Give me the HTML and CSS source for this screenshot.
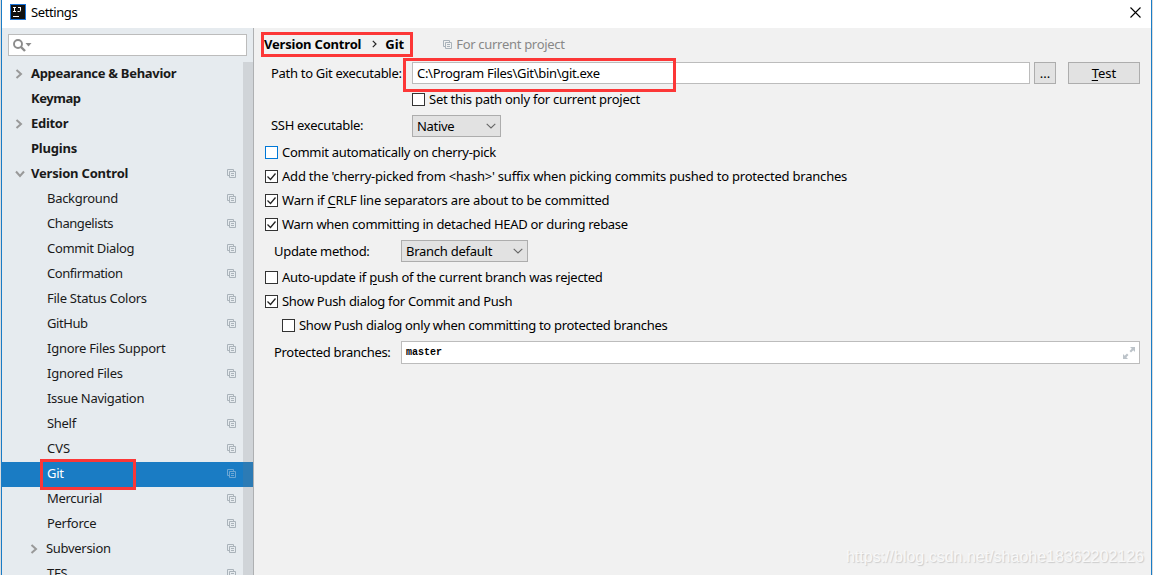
FILE: index.html
```
<!DOCTYPE html>
<html lang="en">
<head>
<meta charset="utf-8">
<title>Settings</title>
<link rel="stylesheet" href="styles.css">
</head>
<body>
<svg class="defs" width="0" height="0">
  <symbol id="copy" viewBox="0 0 9 9"><path d="M2.5 6.500h-2v-6h6v2M2.500 2.500h6v6h-6zM4 4.500h3M4 6.500h3" fill="none" stroke="currentColor"/></symbol>
  <symbol id="check" viewBox="0 0 11 11"><path d="M1.500 5.500l3 3 5-6" fill="none" stroke="#222" stroke-width="1.300"/></symbol>
  <symbol id="down" viewBox="0 0 10 6"><path d="M.7.8L5 5 9.300.8" fill="none" stroke="#666" stroke-width="1.100"/></symbol>
  <symbol id="tright" viewBox="0 0 8 10"><path d="M1.500 1L6 5 1.500 9" fill="none" stroke="#999" stroke-width="2"/></symbol>
  <symbol id="tdown" viewBox="0 0 10 8"><path d="M1 1.500L5 6 9 1.500" fill="none" stroke="#999" stroke-width="2"/></symbol>
</svg>
<div class="window">
  <header class="titlebar">
    <svg class="logo" width="16" height="16" viewBox="0 0 16 16"><rect width="16" height="16" fill="#1a73d8"/><rect x="1" y="1" width="14" height="14" fill="#111"/><path d="M3 3.500h3M4.500 3v5M3 7.500h3M8 3.500h3M10.500 3v3.500q0 1-1 1H7.500" fill="none" stroke="#fff"/><path d="M3 12.500h6" stroke="#fff"/></svg>
    <span class="title">Settings</span>
    <svg class="close" width="11" height="11" viewBox="0 0 11 11"><path d="M.5.5l10 10M10.500.5l-10 10" stroke="#000" stroke-width="1.100"/></svg>
  </header>
  <div class="body">
    <aside class="sidebar">
      <div class="search"><svg width="20" height="14" viewBox="0 0 20 14"><circle cx="5" cy="5" r="4" fill="none" stroke="#8c8c8c" stroke-width="1.900"/><path d="M8 8l4 4" stroke="#8c8c8c" stroke-width="2.400"/><path d="M12.500 4h6l-3 3.500z" fill="#8c8c8c"/></svg></div>
      <div class="treewrap">
        <ul class="tree">
          <li class="top"><svg class="arrow" width="8" height="10"><use href="#tright"/></svg><b>Appearance &amp; Behavior</b></li>
          <li class="top"><b class="tight">Keymap</b></li>
          <li class="top"><svg class="arrow" width="8" height="10"><use href="#tright"/></svg><b>Editor</b></li>
          <li class="top"><b class="loose">Plugins</b></li>
          <li class="top"><svg class="arrow" width="10" height="8"><use href="#tdown"/></svg><b class="loose">Version Control</b><svg class="copy" width="9" height="9"><use href="#copy"/></svg></li>
          <li><span>Background</span><svg class="copy" width="9" height="9"><use href="#copy"/></svg></li>
          <li><span class="tight">Changelists</span><svg class="copy" width="9" height="9"><use href="#copy"/></svg></li>
          <li><span>Commit Dialog</span><svg class="copy" width="9" height="9"><use href="#copy"/></svg></li>
          <li><span class="tight">Confirmation</span><svg class="copy" width="9" height="9"><use href="#copy"/></svg></li>
          <li><span class="mid">File Status Colors</span><svg class="copy" width="9" height="9"><use href="#copy"/></svg></li>
          <li><span class="tight">GitHub</span><svg class="copy" width="9" height="9"><use href="#copy"/></svg></li>
          <li><span class="mid">Ignore Files Support</span><svg class="copy" width="9" height="9"><use href="#copy"/></svg></li>
          <li><span class="mid">Ignored Files</span><svg class="copy" width="9" height="9"><use href="#copy"/></svg></li>
          <li><span>Issue Navigation</span><svg class="copy" width="9" height="9"><use href="#copy"/></svg></li>
          <li><span>Shelf</span><svg class="copy" width="9" height="9"><use href="#copy"/></svg></li>
          <li><span class="even">CVS</span><svg class="copy" width="9" height="9"><use href="#copy"/></svg></li>
          <li class="selected"><span>Git</span><svg class="copy" width="9" height="9"><use href="#copy"/></svg><i class="mark mark-tree"></i></li>
          <li><span>Mercurial</span><svg class="copy" width="9" height="9"><use href="#copy"/></svg></li>
          <li><span>Perforce</span><svg class="copy" width="9" height="9"><use href="#copy"/></svg></li>
          <li class="sub"><svg class="arrow" width="8" height="10"><use href="#tright"/></svg><span>Subversion</span><svg class="copy" width="9" height="9"><use href="#copy"/></svg></li>
          <li><span>TFS</span><svg class="copy" width="9" height="9"><use href="#copy"/></svg></li>
        </ul>
        <div class="scrollbar"></div>
      </div>
    </aside>
    <main class="panel">
      <div class="crumbs"><b class="loose">Version Control</b><svg class="sep" width="5" height="8" viewBox="0 0 5 8"><path d="M.8.8L4 4 .8 7.200" fill="none" stroke="#222" stroke-width="1.200"/></svg><b class="leaf even">Git</b><svg class="scope-icon" width="9" height="9"><use href="#copy"/></svg><span class="scope">For current project</span><i class="mark mark-crumbs"></i></div>
      <div class="path-row"><label>Path to Git executable:</label><div class="field path"><span>C:\Program Files\Git\bin\git.exe</span></div><button class="more">...</button><button class="test"><span><u>T</u>est</span></button><i class="mark mark-path"></i></div>
      <div class="check only"><i class="box"></i><span class="mid">Set this path only for current project</span></div>
      <div class="ssh-row"><label>SSH executable:</label><div class="select native"><span>Native</span><svg width="10" height="6"><use href="#down"/></svg></div></div>
      <div class="check first"><i class="box focus"></i><span>Commit automatically on cherry-pick</span></div>
      <div class="check"><i class="box"><svg width="11" height="11"><use href="#check"/></svg></i><span class="long">Add the 'cherry-picked from &lt;hash&gt;' suffix when picking commits pushed to protected branches</span></div>
      <div class="check"><i class="box"><svg width="11" height="11"><use href="#check"/></svg></i><span class="loose">Warn if <u>C</u>RLF line separators are about to be committed</span></div>
      <div class="check"><i class="box"><svg width="11" height="11"><use href="#check"/></svg></i><span>Warn when committing in detached HEAD or during rebase</span></div>
      <div class="update-row"><label>Update method:</label><div class="select branch"><span class="mid">Branch default</span><svg width="10" height="6"><use href="#down"/></svg></div></div>
      <div class="check"><i class="box"></i><span class="mid">Auto-update if <u>p</u>ush of the current branch was rejected</span></div>
      <div class="check"><i class="box"><svg width="11" height="11"><use href="#check"/></svg></i><span>Show Push dialog for Commit and Push</span></div>
      <div class="check nested"><i class="box"></i><span>Show Push dialog only when committing to protected branches</span></div>
      <div class="protected-row"><label>Protected branches:</label><div class="field branches"><span class="mono">master</span><svg width="12" height="12" viewBox="0 0 12 12"><path d="M7 0h5v5l-1.700-1.700L8 5.500 6.500 4l2.300-2.300zM0 7l1.700 1.700L4 6.500 5.500 8 3.300 10.300 5 12H0z" fill="#bcc3c9"/></svg></div></div>
      <div class="watermark">https://blog.csdn.net/shaohe18362202126</div>
    </main>
  </div>
</div>
</body>
</html>
```
FILE: styles.css
```
* { box-sizing: border-box; }
body { margin: 0; width: 1153px; height: 575px; overflow: hidden; background: #dcdcdc; font: 13px "Noto Sans", "Open Sans", sans-serif; letter-spacing: -.3px; color: #000; }
.defs { position: absolute; }
.window { width: 1151px; height: 575px; margin-left: 1px; border-left: 1px solid #1a7cc6; border-right: 1px solid #1a7cc6; background: #fff; display: flex; flex-direction: column; }
span, b, label { white-space: nowrap; }
.tight { letter-spacing: -.43px; }
.mid { letter-spacing: -.26px; }
.long { letter-spacing: -.21px; }
.loose { letter-spacing: -.2px; }
.even { letter-spacing: 0; }
.titlebar { height: 28px; flex: none; display: flex; align-items: center; padding: 0 10px 4px 8px; }
.title { margin-left: 5px; letter-spacing: -.4px; }
.close { margin-left: auto; }
.body { display: flex; height: 547px; }
.sidebar { width: 252px; flex: none; background: #e6ebef; border-right: 1px solid #aeb0b2; display: flex; flex-direction: column; overflow: hidden; }
.search { margin: 6px; width: 239px; height: 22px; flex: none; border: 1px solid #bcbcbc; background: #fff; padding: 4px; line-height: 0; }
.treewrap { display: grid; grid-template-columns: 241px 10px; height: 513px; overflow: hidden; }
.tree { grid-area: 1 / 1 / 2 / 3; margin: 0; padding: 0; list-style: none; color: #1a1a1a; }
.scrollbar { grid-area: 1 / 2; background: rgba(120, 120, 125, .2); z-index: 1; }
.tree li { position: relative; height: 25px; display: flex; align-items: center; padding: 0 17px 4px 45px; }
.tree li.top { padding-left: 29px; }
.tree li.sub { padding-left: 44px; }
.tree .arrow { margin: 2px 8px 0 -16px; flex: none; }
.tree .arrow[width="10"] { margin-right: 6px; }
.copy { margin: 2px 0 0 auto; color: #aab3ba; flex: none; }
.tree li.selected { background: #1a7cc4; color: #fff; }
.selected .copy { color: #6da7d4; }
.mark { position: absolute; border: 3px solid #fc3737; z-index: 2; }
.mark-tree { left: 38px; top: -3px; width: 96px; height: 31px; }
.mark-crumbs { left: 7px; top: 4px; width: 152px; height: 25px; }
.mark-path { left: 149px; top: -3px; width: 273px; height: 34px; }
.panel { flex: 1; background: #f1f1f1; display: flex; flex-direction: column; position: relative; }
.crumbs { height: 33px; display: flex; align-items: center; padding: 0 0 1px 10px; position: relative; }
.sep { margin-left: 11px; }
.leaf { margin-left: 8px; }
.scope-icon { color: #aab3ba; margin-left: 39px; }
.scope { color: #888; margin-left: 4px; }
.path-row { height: 24px; display: flex; align-items: center; padding-left: 17px; position: relative; }
.path-row label { width: 141px; padding-bottom: 1px; }
.field { border: 1px solid #bcbcbc; background: #fff; display: flex; align-items: center; }
.path { width: 618px; height: 22px; padding-left: 4px; }
.path span { line-height: 18px; padding-bottom: 1px; }
button { height: 22px; border: 1px solid #adadad; background: #e2e2e2; font: inherit; letter-spacing: 0; padding: 0 0 1px; color: #000; }
.more { width: 22px; margin-left: 4px; line-height: 16px; }
.test { width: 72px; margin-left: 12px; }
u { text-underline-offset: 2px; }
.check { height: 24px; display: flex; align-items: flex-start; padding: 5px 0 0 11px; line-height: 12px; }
.only { height: 29px; padding: 8px 0 0 158px; }
.nested { padding-left: 28px; }
.first { margin-top: 3px; }
.box { width: 13px; height: 13px; border: 1px solid #333; background: #fff; flex: none; margin-right: 4px; line-height: 0; }
.focus { border-color: #0078d7; }
.ssh-row { height: 24px; display: flex; align-items: center; padding-left: 17px; }
.ssh-row label { width: 141px; padding-bottom: 2px; }
.select { height: 22px; border: 1px solid #adadad; background: #e2e2e2; display: flex; align-items: center; justify-content: space-between; padding: 0 4px; }
.native { width: 89px; }
.branch { width: 127px; }
.update-row { height: 29px; display: flex; align-items: flex-start; padding: 3px 0 0 20px; }
.update-row label { width: 127px; line-height: 22px; }
.protected-row { display: flex; padding: 3px 0 0 20px; }
.protected-row label { width: 127px; line-height: 23px; }
.branches { width: 739px; height: 23px; padding: 0 4px; justify-content: space-between; }
.mono { font: bold 10px "Liberation Mono", monospace; letter-spacing: 0; }
.watermark { position: absolute; right: 7px; bottom: 9px; font: 16px "Liberation Sans", sans-serif; letter-spacing: 0; color: #f8f8f8; text-shadow: 1px 1px 1px #ccc; }
```
